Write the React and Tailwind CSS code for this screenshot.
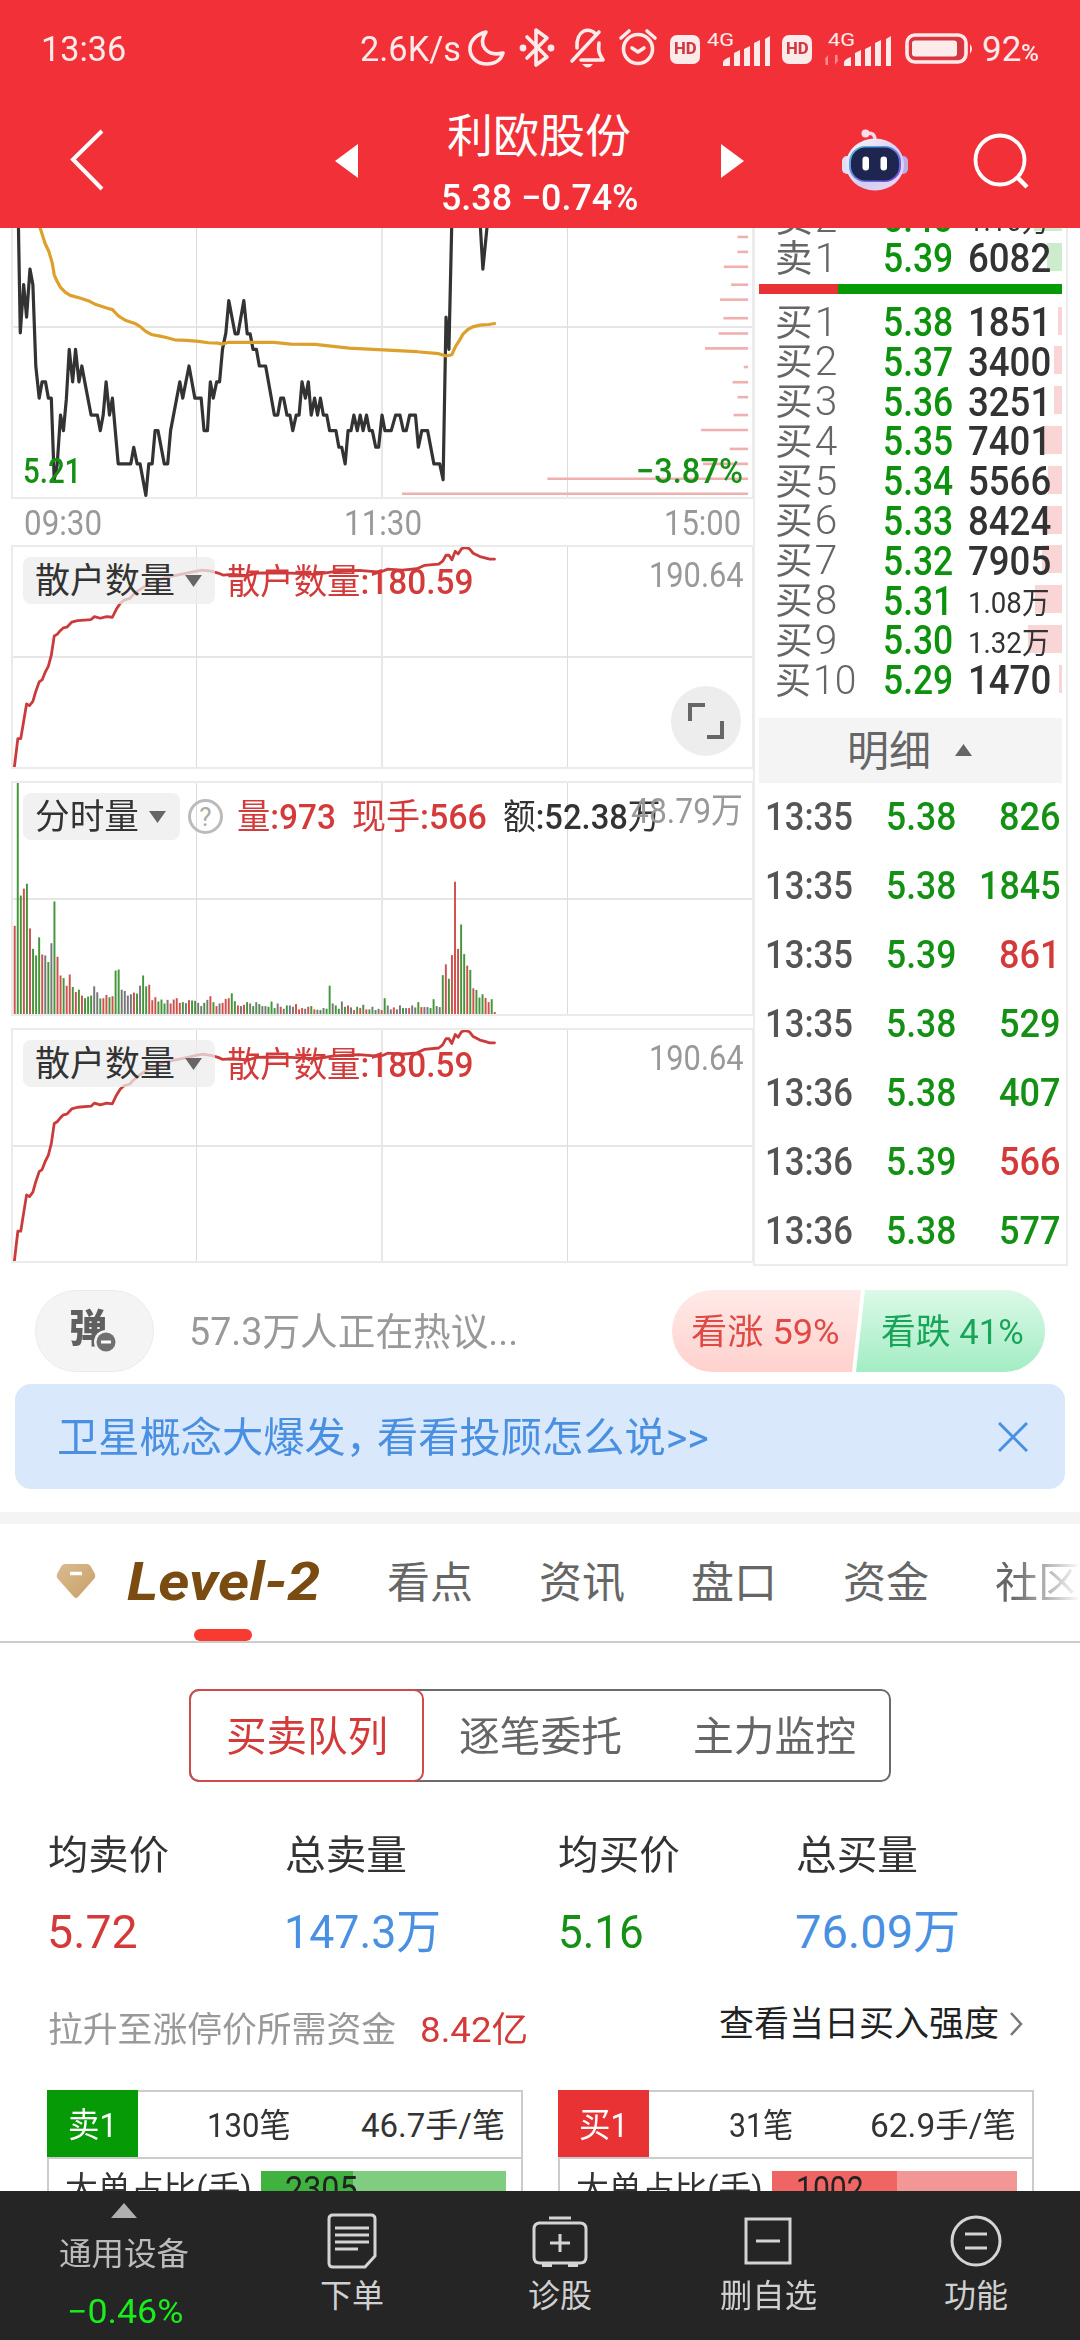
import { useLayoutEffect, useRef, useState } from "react";
import clsx from "clsx";

const CJK = "font-['Roboto','Noto_Sans_CJK_SC',sans-serif]";

/* One line of text, condensed or widened to fill the width of its box. */
function Fit({ children, className }) {
  const box = useRef(null);
  const text = useRef(null);
  const [scale, setScale] = useState(1);
  useLayoutEffect(() => {
    const measure = () => setScale(box.current.clientWidth / text.current.offsetWidth);
    measure();
    document.fonts.ready.then(() => box.current && measure());
  }, []);
  return (
    <span ref={box} className={clsx("flex shrink-0 whitespace-pre leading-none", className)}>
      <span ref={text} className="inline-block shrink-0 origin-left" style={{ transform: `scaleX(${scale})` }}>
        {children}
      </span>
    </span>
  );
}

function Signal({ data }) {
  return (
    <svg viewBox="0 0 64 40" className="h-10 w-16 shrink-0 overflow-visible" fill="#fdeaea">
      <text x="0" y="17" fontSize="19" className="font-['Roboto']" textLength="27" lengthAdjust="spacingAndGlyphs">4G</text>
      <path d="M16 37v-4q1-3 7-5v9zM27 37V24l6-3v16zM37 37V20l6-3v20zM47 37V14l6-3v26zM58 37V10l5-3v30z" />
      {data && <path d="M-4 31l4-5v10h-2.500v-6zM11 30l-4 6v-10h2.500v5z" opacity=".5" />}
    </svg>
  );
}

function Hd() {
  return (
    <span className="flex h-[29px] w-[30px] shrink-0 items-center justify-center rounded-[7px] bg-[#fdeaea] text-[#cf3a42]">
      <Fit className="w-[23px] text-base font-extrabold">HD</Fit>
    </span>
  );
}

function StatusBar() {
  return (
    <div className="flex h-24 items-center pl-[41px] pt-[2px] text-[#fdeaea]">
      <Fit className="w-[85px] text-[35px]">13:36</Fit>
      <Fit className="ml-[234px] w-[101px] text-[35px]">2.6K/s</Fit>
      <svg viewBox="460 22 200 54" className="h-[54px] w-[200px] shrink-0" fill="none" stroke="#fdeaea" strokeWidth="3.600" strokeLinecap="round" strokeLinejoin="round">
        <path d="M485 32c-24 6-19 32 1 32c8 0 14-4 16-11c-16 4-26-8-17-21z" />
        <path d="M526 37l20 20l-11 8V30l11 8l-20 20" />
        <g fill="#fdeaea" stroke="none"><circle cx="522" cy="48" r="3.400" /><circle cx="550" cy="48" r="3.400" /></g>
        <path d="M571 61L598 32M576 48c-1-19 12-21 19-14M598 43c-1 9 0 10 4 17h-22" />
        <path d="M581 64h11q-5 7-11 0z" fill="#fdeaea" stroke="none" />
        <circle cx="637" cy="49" r="14.500" />
        <path d="M620 38l8-7M654 38l-8-7M631 48l6 4l6-4" />
      </svg>
      <span className="ml-[9px]"><Hd /></span>
      <span className="ml-[7px] flex"><Signal /></span>
      <span className="ml-[11px]"><Hd /></span>
      <span className="ml-4 flex"><Signal data /></span>
      <svg viewBox="0 0 70 32" className="ml-[13px] h-8 w-[70px] shrink-0" fill="none">
        <rect x="2" y="2" width="59" height="27" rx="8" stroke="#fdeaea" strokeWidth="3.600" />
        <rect x="5" y="5" width="53" height="21" rx="5" fill="#cf3a42" />
        <rect x="7" y="7.500" width="45" height="16" rx="3" fill="#fdeaea" />
        <path d="M65 11q4 4.500 0 10z" fill="#fdeaea" />
      </svg>
      <Fit className="ml-[7px] w-[39px] text-[35px]">92</Fit>
      <Fit className="w-[18px] pt-[9px] text-[23px] font-medium">%</Fit>
    </div>
  );
}

function Robot() {
  return (
    <svg viewBox="0 0 68 62" className="h-[62px] w-[68px] shrink-0">
      <defs>
        <linearGradient id="head" x1="0" y1="0" x2="1" y2="1"><stop offset="0" stopColor="#fdf5fb" /><stop offset=".6" stopColor="#d4cdf3" /><stop offset="1" stopColor="#e9dcf4" /></linearGradient>
        <linearGradient id="visor" x1="0" y1="0" x2="1" y2="1"><stop offset="0" stopColor="#4cc3e0" /><stop offset="1" stopColor="#7a3fe0" /></linearGradient>
      </defs>
      <path d="M24 5q10-3 10 6" stroke="#f6d9ea" strokeWidth="3.500" fill="none" />
      <circle cx="24.500" cy="4.500" r="4" fill="#f9dfec" />
      <rect x="1" y="27" width="12" height="18" rx="5" fill="#dfe0f6" />
      <rect x="55" y="27" width="12" height="18" rx="5" fill="#b9aee8" />
      <ellipse cx="34" cy="35.500" rx="29" ry="26" fill="url(#head)" />
      <rect x="8" y="17" width="52" height="36" rx="16" fill="url(#visor)" />
      <rect x="10" y="18.500" width="48" height="33" rx="14.500" fill="#1e2650" />
      <rect x="21.500" y="27.500" width="6.500" height="14" rx="3.200" fill="#fff" />
      <rect x="39.500" y="27.500" width="6.500" height="14" rx="3.200" fill="#fff" />
    </svg>
  );
}

function Header() {
  return (
    <header className="h-[228px] shrink-0 bg-[#f13038] text-white">
      <StatusBar />
      <div className="flex h-[132px] items-start">
        <svg viewBox="0 0 36 62" className="ml-[69px] mt-[33px] h-[62px] w-9" fill="none" stroke="#fff" strokeWidth="4"><path d="M33 2L4 30.500L33 60" /></svg>
        <svg viewBox="0 0 23 34" className="ml-[230px] mt-[48px] h-[34px] w-[23px]" fill="#fff"><path d="M23 0v34L0 17z" /></svg>
        <div className="ml-[82px] flex w-[198px] flex-col items-center">
          <Fit className="mt-[17px] w-[184px] text-[46px]">利欧股份</Fit>
          <Fit className="mt-[21px] w-[197px] text-[36px] font-medium">5.38 −0.74%</Fit>
        </div>
        <svg viewBox="0 0 23 34" className="ml-[83px] mt-[48px] h-[34px] w-[23px]" fill="#fff"><path d="M0 0v34L23 17z" /></svg>
        <div className="ml-[97px] mt-[33px]"><Robot /></div>
        <svg viewBox="0 0 58 58" className="ml-[64px] mt-[36px] h-[58px] w-[58px]" fill="none" stroke="#fff" strokeWidth="3.800"><circle cx="27" cy="28" r="24.500" /><path d="M44 45l10 10" strokeWidth="4.500" /></svg>
      </div>
    </header>
  );
}

const PRICE =
  "38,0 42,340 49,195 55,293 62,148 68,195 74,440 81,537 87,488 94,488 100,537 106,537 112,783 118,740 125,588 131,635 137,540 143,390 150,488 156,390 163,488 169,440 175,488 188,588 201,588 207,635 213,588 219,488 226,588 232,537 244,735 270,735 276,685 283,735 289,735 301,830 307,735 314,735 320,635 326,635 339,735 346,735 352,635 371,488 377,537 390,440 402,537 415,537 421,635 428,635 434,488 440,537 447,488 453,488 459,390 466,340 472,243 485,343 491,343 503,243 510,343 516,343 522,390 529,390 535,440 548,440 566,588 573,588 579,537 585,537 592,588 598,588 604,635 611,588 617,588 623,488 630,537 636,488 642,588 649,537 655,588 661,537 667,588 674,588 680,635 693,635 699,685 705,685 712,735 718,635 724,635 730,588 737,635 743,588 749,635 756,588 762,635 768,635 775,685 781,685 788,588 794,635 807,635 816,588 825,588 832,635 838,635 845,588 857,588 863,685 870,635 882,635 895,735 907,735 914,783 920,293 926,390 932,0";
const AVERAGE =
  "80,10 93,70 101,95 108,130 112,165 118,185 125,203 135,218 145,227 165,235 185,245 195,253 220,265 232,270 245,290 260,303 280,313 290,322 300,335 312,345 330,350 345,355 360,361 385,363 410,366 430,370 450,371 458,374 470,369 565,369 600,374 650,375 720,386 800,392 860,397 905,403 920,410 932,406 940,380 948,362 955,344 965,330 975,322 990,317 1008,315 1020,312";
const RETAIL =
  "30,712 37,628 43,628 49,575 55,523 61,528 68,515 74,485 81,456 87,450 93,428 100,408 106,375 112,317 118,312 125,300 131,292 138,290 148,275 160,270 188,267 195,258 207,263 220,258 232,260 240,236 248,218 256,208 268,203 275,192 285,180 295,170 310,158 325,148 340,140 360,134 380,128 400,122 418,117 435,120 450,126 460,132 480,130 510,134 530,126 560,125 600,126 650,130 690,122 740,118 785,123 800,114 830,117 860,113 875,103 905,99 913,90 920,72 926,72 932,86 939,60 945,68 952,52 960,49 968,52 976,66 990,76 1000,80 1010,84 1020,84";
const DEPTH = [[51, 1521], [96, 1521], [141, 1493], [195, 1508], [240, 1485], [296, 1492], [342, 1482], [387, 1454], [443, 1534], [489, 1511], [534, 1521], [588, 1513], [633, 1446], [690, 1505], [735, 1450], [780, 1129], [825, 829]];
const VOLUME =
  "470r 33g 378g 357r 342g 478r 540g 560g 505g 557r 560k 580g 523k 396g 564r 621r 629g 652r 618r 656g 671r 664g 682r 690g 685g 682g 654k 672k 691g 690r 680r 687g 684r 606g 603g 664k 668k 682k 678k 673r 676g 652k 621g 654g 649r 696r 687r 700g 694g 706g 695k 706r 694r 690r 704r 702g 705k 696r 697g 698g 704k 714k 704g 695k 684r 702g 714r 706k 704r 692r 690r 675g 699g 712r 714k 710r 702g 706k 714g 702k 708g 714k 714k 716g 700g 720g 706k 716r 722k 712g 712k 716k 708r 724r 720r 722k 716r 714g 724r 725k 726g 720k 722g 652g 706k 712g 722g 700k 716g 712r 718k 726r 716g 720r 710g 724r 724g 716k 726g 722k 726r 690g 712k 724k 718r 724k 712k 720g 720k 720r 712k 718k 702g 717r 717k 717k 720g 693g 714k 717k 620g 587r 631g 559r 336r 540r 466g 556g 591r 604g 660r 665g 688g 678g 689r 702r 693g 732r".split(" ");
const BAR = { r: "#d0504e", g: "#43963a", k: "#777777" };
const BAR_STEP = 990 / (VOLUME.length - 1);

/* Chart pane: frame and grid lines, a plot behind and labels in front. */
function Pane({ className, viewBox, open, plot, children }) {
  return (
    <div className={clsx("relative ml-[11px] w-[743px] shrink-0 overflow-hidden border-2 border-[#ebebeb]", open && "border-t-0", className)}>
      <div className={clsx("absolute inset-x-0 h-0.5 bg-[#e6e6e6]", open ? "top-[98px]" : "top-1/2 -mt-px")} />
      <div className="absolute inset-y-0 left-[183px] w-px bg-[#dcdcdc]" />
      <div className="absolute inset-y-0 left-[368px] w-0.5 bg-[#e8e8e8]" />
      <div className="absolute inset-y-0 left-[554px] w-px bg-[#dcdcdc]" />
      <svg viewBox={viewBox} preserveAspectRatio="none" className="absolute inset-0 h-full w-full">{plot}</svg>
      {children}
    </div>
  );
}

const line = { fill: "none", strokeLinejoin: "round", strokeLinecap: "round", vectorEffect: "non-scaling-stroke" };

function Tag({ children, width }) {
  return (
    <div className={clsx("flex h-[47px] items-center gap-[10px] rounded-lg bg-[#ececec]/75 pl-[12px] text-[#333]", width)}>
      {children}
      <svg viewBox="0 0 17 14" className="h-[14px] w-[17px]" fill="#666"><path d="M0 1h17L8.500 13z" /></svg>
    </div>
  );
}

function RetailPane({ className, children }) {
  return (
    <Pane className={className} viewBox="27 47 1524 667" plot={<polyline points={RETAIL} {...line} stroke="#cb3b3b" strokeWidth="2.800" />}>
      <div className="relative flex items-start pl-[10px] pt-[10px]">
        <Tag width="w-[192px]"><Fit className="w-[140px] pt-[2px] text-[35px]">散户数量</Fit></Tag>
        <Fit className="ml-[12px] mt-[8px] w-[246px] text-[35px] font-medium text-[#d43a3a]"><span className="font-normal">散户数量</span>:180.59</Fit>
        <Fit className="ml-auto mr-[8px] mt-[1px] w-[95px] text-[35px] text-[#999]">190.64</Fit>
      </div>
      {children}
    </Pane>
  );
}

function Charts() {
  return (
    <div className="w-[753px] shrink-0">
      <Pane
        open
        className="h-[271px]"
        viewBox="27 24 1524 811"
        plot={
          <>
            {DEPTH.map(([y, x]) => <path key={y} d={`M${x} ${y}H1543`} {...line} strokeLinecap="butt" stroke="#efb0b0" strokeWidth="2.600" />)}
            <polyline points={PRICE} {...line} stroke="#333" strokeWidth="3.200" />
            <polyline points="990,0 996,148 1006,0" {...line} stroke="#333" strokeWidth="3.200" />
            <polyline points={AVERAGE} {...line} stroke="#dda02c" strokeWidth="3.200" />
          </>
        }
      >
        <div className="relative flex items-end justify-between pl-[10px] pr-[9px] pt-[226px] text-[35px] font-medium text-[#149014]">
          <Fit className="w-[58px]">5.21</Fit>
          <Fit className="w-[107px]">−3.87%</Fit>
        </div>
      </Pane>
      <div className="flex h-[46px] items-center justify-between pl-[24px] pr-[12px] pt-[3px] text-[35px] text-[#999]">
        <Fit className="w-[78px]">09:30</Fit>
        <Fit className="w-[78px]">11:30</Fit>
        <Fit className="w-[77px]">15:00</Fit>
      </div>
      <RetailPane className="h-[224px]">
        <div className="absolute left-[658px] top-[139px] flex size-[70px] items-center justify-center rounded-full bg-[#ededed]">
          <svg viewBox="0 0 38 38" className="size-[38px]" fill="none" stroke="#666" strokeWidth="4"><path d="M3 19V3h15M35 19v16H20" /></svg>
        </div>
      </RetailPane>
      <Pane
        className="mt-[12px] h-[235px]"
        viewBox="27 36 1524 702"
        plot={VOLUME.map((v, i) => (
          <rect key={i} x={28.500 + i * BAR_STEP} y={parseInt(v, 10)} width="4" height={738 - parseInt(v, 10)} fill={BAR[v.slice(-1)]} />
        ))}
      >
        <div className="relative flex items-start pl-[10px] pt-[10px] text-[35px]">
          <Tag width="w-[157px]"><Fit className="w-[104px] pt-[2px]">分时量</Fit></Tag>
          <div className="ml-[8px] mt-[6px] flex size-[35px] items-center justify-center rounded-full border-[3px] border-[#bbb] text-[26px] leading-none text-[#aaa]">?</div>
          <div className="flex pt-[7px] font-medium text-[#d43a3a]">
            <Fit className="ml-[14px] w-[99px]"><span className="font-normal">量</span>:973</Fit>
            <Fit className="ml-[16px] w-[135px]"><span className="font-normal">现手</span>:566</Fit>
            <Fit className="ml-[16px] w-[158px] text-[#333]"><span className="font-normal">额</span>:52.38<span className="font-normal">万</span></Fit>
          </div>
          <Fit className="-ml-[30px] mt-[1px] w-[112px] text-[#999]">48.79万</Fit>
        </div>
      </Pane>
      <RetailPane className="mt-[12px] h-[235px]" />
    </div>
  );
}

function QuoteRow({ label, price, qty, small, bar, tone }) {
  return (
    <div className="relative flex h-[39.800px] items-center">
      <div className={clsx("absolute right-[4px] top-[5px] h-7", bar, tone)} />
      <div className="relative flex w-full items-center pt-[2px]">
        <Fit className={clsx("ml-[20px] text-[37px] text-[#666]", label.length > 2 ? "w-[81px]" : "w-[62px]")}>{label[0]}<span className="pl-0.5 text-[40px] font-light">{label.slice(1)}</span></Fit>
        <Fit className={clsx("w-[70px] text-[41px] font-medium text-[#0c920c]", label.length > 2 ? "ml-[27px]" : "ml-[46px]")}>{price}</Fit>
        <Fit className={clsx("ml-[15px] text-[#333]", small ? "w-[82px] pt-1 text-[30px]" : "w-[83px] text-[41px] font-medium")}>{qty}</Fit>
      </div>
    </div>
  );
}

const BUYS = [
  ["买1", "5.38", "1851", "w-[4px]"], ["买2", "5.37", "3400", "w-[8px]"], ["买3", "5.36", "3251", "w-[8px]"],
  ["买4", "5.35", "7401", "w-[18px]"], ["买5", "5.34", "5566", "w-[14px]"], ["买6", "5.33", "8424", "w-[20px]"],
  ["买7", "5.32", "7905", "w-[20px]"], ["买8", "5.31", "1.08万", "w-[27px]", true], ["买9", "5.30", "1.32万", "w-[34px]", true],
  ["买10", "5.29", "1470", "w-[3px]"],
];
const TICKS = [
  ["13:35", "5.38", "826"], ["13:35", "5.38", "1845"], ["13:35", "5.39", "861", true], ["13:35", "5.38", "529"],
  ["13:36", "5.38", "407"], ["13:36", "5.39", "566", true], ["13:36", "5.38", "577"],
];

function OrderBook() {
  return (
    <div className="h-[1037.500px] w-[315px] shrink-0 overflow-hidden border-x-2 border-b-2 border-[#ececec]">
      <div className="-mt-[30px]"><QuoteRow label="卖2" price="5.40" qty="1.10万" small bar="w-[28px]" tone="bg-[#cdebcd]" /></div>
      <QuoteRow label="卖1" price="5.39" qty="6082" bar="w-[15px]" tone="bg-[#cdebcd]" />
      <div className="ml-[4px] mr-[4px] mt-[6px] flex h-[10px] bg-[#069a06]"><div className="w-[79px] bg-[#e93233]" /></div>
      <div className="mt-[8px]">
        {BUYS.map(([label, price, qty, bar, small]) => <QuoteRow key={label} label={label} price={price} qty={qty} bar={bar} small={small} tone="bg-[#f9d5d5]" />)}
      </div>
      <div className="ml-[4px] mr-[4px] mt-[18px] flex h-[65px] items-center bg-[#f4f4f4] pl-[88px] text-[#666]">
        <Fit className="w-[84px] pt-[3px] text-[42px]">明细</Fit>
        <svg viewBox="0 0 17 12" className="ml-[24px] h-[12px] w-[17px]" fill="#666"><path d="M0 12h17L8.500 0z" /></svg>
      </div>
      {TICKS.map(([time, price, qty, up], i) => (
        <div key={i} className="flex h-[69px] items-center pl-[10px] pr-[5px] text-[39px] font-medium text-[#149014]">
          <Fit className="w-[88px] text-[#555]">{time}</Fit>
          <Fit className="ml-[33px] w-[70px]">{price}</Fit>
          <Fit className={clsx("ml-auto", qty.length > 3 ? "w-[82px]" : "w-[62px]", up && "text-[#d43a3a]")}>{qty}</Fit>
        </div>
      ))}
    </div>
  );
}

function Discussion() {
  return (
    <div className="mt-[25px] flex h-[82px] items-center">
      <div className="relative ml-[35px] flex h-[82px] w-[119px] items-center justify-center rounded-full border border-[#ececec] bg-[#f4f4f4]">
        <Fit className="mr-[13px] -mt-[4px] w-[38px] text-[39px] font-black text-[#606060]">弹</Fit>
        <svg viewBox="0 0 24 24" className="absolute left-[58px] top-[39px] size-6"><circle cx="12" cy="12" r="12" fill="#f4f4f4" /><circle cx="12" cy="12" r="9.500" fill="#707070" /><path d="M7 12h10" stroke="#fff" strokeWidth="3" /></svg>
      </div>
      <Fit className="ml-[35px] w-[329px] pt-[2px] text-[38px] text-[#999]">57.3万人正在热议...</Fit>
      <div className="relative ml-[154px] flex h-[82px] w-[373px] items-center overflow-hidden rounded-full bg-linear-to-b from-[#ffeae8] to-[#ffd1cd] text-[35px]">
        <svg viewBox="0 0 193 82" className="absolute right-0 top-0 h-[82px] w-[193px]">
          <defs><linearGradient id="fall" x1="0" y1="0" x2="0" y2="1"><stop offset="0" stopColor="#dcf9e8" /><stop offset="1" stopColor="#a2edc3" /></linearGradient></defs>
          <path d="M9 0H193V82H0z" fill="#fff" />
          <path d="M13 0H193V82H4z" fill="url(#fall)" />
        </svg>
        <Fit className="relative ml-[19px] w-[149px] pt-[2px] text-[#e14a44]">看涨 59%</Fit>
        <Fit className="relative ml-[41px] w-[143px] pt-[2px] text-[#18a558]">看跌 41%</Fit>
      </div>
    </div>
  );
}

function Diamond() {
  return (
    <svg viewBox="0 0 40 36" className="-mt-[3px] ml-[56px] h-9 w-10 shrink-0">
      <defs><linearGradient id="gem" x1="0" y1="0" x2="1" y2="1"><stop offset="0" stopColor="#d9bb91" /><stop offset="1" stopColor="#c9a067" /></linearGradient></defs>
      <path d="M9 0H31Q33 0 34.500 2L39 10Q40 13 38 15L22 33Q20 35 18 33L2 15Q0 13 1 10L5.500 2Q7 0 9 0z" fill="url(#gem)" />
      <path d="M14 9.500h12" stroke="#fff" strokeWidth="3.500" />
    </svg>
  );
}

function Tabs() {
  return (
    <div className="border-b-2 border-[#ccc]">
      <div className="flex h-[105px] items-center overflow-hidden pt-[13px] text-[43px] text-[#666]">
        <Diamond />
        <Fit className="ml-[31px] -mt-[3px] w-[193px] text-[54px] font-bold italic text-[#7a4c12]">Level-2</Fit>
        <Fit className="ml-[67px] w-[86px]">看点</Fit>
        <Fit className="ml-[66px] w-[86px]">资讯</Fit>
        <Fit className="ml-[66px] w-[86px]">盘口</Fit>
        <Fit className="ml-[66px] w-[86px]">资金</Fit>
        <Fit className="ml-[66px] w-[86px] mask-r-from-20% mask-r-to-100%">社区</Fit>
      </div>
      <div className="ml-[194px] h-[12px] w-[58px] rounded-full bg-[#f93a30]" />
    </div>
  );
}

function Level2() {
  return (
    <>
      <div className="ml-[189px] mt-[46px] flex h-[93px] w-[702px] items-center rounded-[10px] border-2 border-[#6b6b6b] text-[41px] text-[#666]">
        <div className="-my-0.5 -ml-0.5 flex h-[93px] w-[235px] items-center justify-center rounded-[10px] border-2 border-[#cf4a4a] text-[#d43a3a]"><Fit className="w-[162px] pt-[4px]">买卖队列</Fit></div>
        <Fit className="ml-[35px] w-[163px] pt-[4px]">逐笔委托</Fit>
        <Fit className="ml-[71px] w-[163px] pt-[4px]">主力监控</Fit>
      </div>
      <div className="mt-[54px] flex text-[40px] text-[#333]">
        <Fit className="ml-[48px] w-[121px]">均卖价</Fit>
        <Fit className="ml-[116px] w-[122px]">总卖量</Fit>
        <Fit className="ml-[151px] w-[122px]">均买价</Fit>
        <Fit className="ml-[116px] w-[122px]">总买量</Fit>
      </div>
      <div className="mt-[32px] flex text-[47px] text-[#4a90e2]">
        <Fit className="ml-[47px] w-[91px] text-[#d43a3a]">5.72</Fit>
        <Fit className="ml-[146px] w-[157px]">147.3万</Fit>
        <Fit className="ml-[117px] w-[86px] text-[#149014]">5.16</Fit>
        <Fit className="ml-[151px] w-[165px]">76.09万</Fit>
      </div>
      <div className="mt-[52px] flex text-[35px]">
        <Fit className="ml-[48px] mt-[6px] w-[348px] text-[#999]">拉升至涨停价所需资金</Fit>
        <Fit className="ml-[24px] mt-[6px] w-[108px] text-[#d43a3a]">8.42亿</Fit>
        <Fit className="ml-[191px] w-[280px] text-[#222]">查看当日买入强度</Fit>
        <svg viewBox="0 0 14 24" className="ml-[10px] mt-[5px] h-6 w-[14px]" fill="none" stroke="#777" strokeWidth="2.500"><path d="M2 1l10 11L2 23" /></svg>
      </div>
    </>
  );
}

function QueueCard({ side, head, badge, count, countBox, per, perBox, qty, qtyBox, barBg, barFg }) {
  return (
    <div className="w-[476px] shrink-0 border-2 border-b-0 border-[#ccc] text-[33px] text-[#333]">
      <div className="flex h-[67px] items-center border-b-2 border-[#ccc]">
        <div className={clsx("-ml-0.5 -mt-0.5 flex h-[67px] w-[91px] items-center justify-center text-white", badge)}><Fit className="w-[49px] pt-[2px] text-[34px]">{side}</Fit></div>
        <Fit className={clsx("pt-px", countBox)}>{count}</Fit>
        <Fit className={clsx("ml-auto mr-[16px] pt-px", perBox)}>{per}</Fit>
      </div>
      <div className="flex items-start pl-[16px] pt-[12px]">
        <Fit className="w-[187px] pt-px">{head}</Fit>
        <div className={clsx("ml-[9px] flex h-[60px] w-[245px]", barBg)}>
          <div className={barFg}><Fit className={clsx("ml-[24px] mt-px text-[35px] text-[#222]", qtyBox)}>{qty}</Fit></div>
        </div>
      </div>
    </div>
  );
}

const icon = { fill: "none", stroke: "#d4d4d4", strokeWidth: 3 };

function NavItem({ children, label, width }) {
  return (
    <div className="flex w-[208px] flex-col items-center pt-[20px]">
      <svg viewBox="0 0 60 60" className="size-[60px]" {...icon}>{children}</svg>
      <Fit className={clsx("mt-[9px] text-[32px]", width)}>{label}</Fit>
    </div>
  );
}

function BottomNav() {
  return (
    <nav className="flex h-[149px] shrink-0 bg-[#252525] text-[#d0d0d0]">
      <div className="flex w-[248px] flex-col items-center pt-[12px]">
        <svg viewBox="0 0 26 15" className="h-[15px] w-[26px]" fill="#b0b0b0"><path d="M0 15h26L13 0z" /></svg>
        <Fit className="mt-[20px] w-[130px] text-[32px] text-[#bbb]">通用设备</Fit>
        <Fit className="mt-[25px] ml-[1px] w-[116px] text-[33px] text-[#19ee1d]">−0.46%</Fit>
      </div>
      <NavItem label="下单" width="w-[64px]">
        <path d="M11 4H49Q53 4 53 8V45L43 56H11Q7 56 7 52V8Q7 4 11 4zM13 17H47M13 24H47M13 31H47M13 38H36" />
      </NavItem>
      <NavItem label="诊股" width="w-[64px]">
        <path d="M8 12H50Q56 12 56 18V46Q56 52 50 52H10Q4 52 4 46V18Q4 12 10 12M19 7H41M30 23V41M20 32H40M12 54.500H22M38 54.500H48" />
      </NavItem>
      <NavItem label="删自选" width="w-[97px]">
        <path d="M8 8H52V52H8zM18 30H42" />
      </NavItem>
      <NavItem label="功能" width="w-[64px]">
        <circle cx="30" cy="30" r="24" /><path d="M19 23H41M19 37H41" />
      </NavItem>
    </nav>
  );
}

export default function App() {
  return (
    <div className={clsx("flex h-[2340px] w-[1080px] flex-col overflow-hidden bg-white", CJK)}>
      <Header />
      <main className="min-h-0 flex-1 overflow-hidden">
        <section className="flex h-[1037px]"><Charts /><OrderBook /></section>
        <Discussion />
        <div className="mx-[15px] mt-[12px] flex h-[105px] items-center rounded-2xl bg-[#d9e8fb] text-[41px] text-[#4a90e2]">
          <Fit className="ml-[42px] w-[652px] pt-[3px]">卫星概念大爆发<span className="-mr-[10px]">，</span>看看投顾怎么说&gt;&gt;</Fit>
          <svg viewBox="0 0 30 30" className="ml-auto mr-[37px] size-[30px]" fill="none" stroke="#4a90e2" strokeWidth="3"><path d="M1 1L29 29M29 1L1 29" /></svg>
        </div>
        <div className="mt-[23px] h-[12px] bg-[#f4f4f4]" />
        <Tabs />
        <Level2 />
        <div className="ml-[47px] mt-[42px] flex gap-[35px]">
          <QueueCard side="卖1" head="大单占比(手)" badge="bg-[#069a06]" count="130笔" countBox="ml-[69px] w-[84px]" per="46.7手/笔" perBox="w-[144px]" qty="2305" qtyBox="w-[73px]" barBg="bg-[#80cc80]" barFg="w-[92px] bg-[#40b240]" />
          <QueueCard side="买1" head="大单占比(手)" badge="bg-[#e93233]" count="31笔" countBox="ml-[80px] w-[64px]" per="62.9手/笔" perBox="w-[146px]" qty="1002" qtyBox="w-[68px]" barBg="bg-[#f39696]" barFg="w-[125px] bg-[#ee6564]" />
        </div>
      </main>
      <BottomNav />
    </div>
  );
}
